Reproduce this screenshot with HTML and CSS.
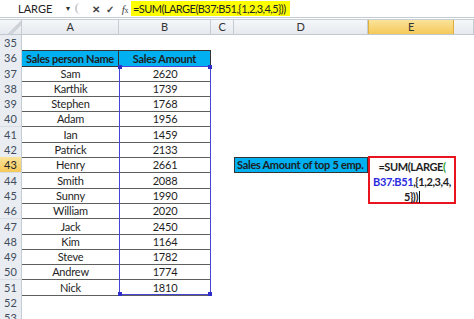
FILE: index.html
```html
<!DOCTYPE html>
<html lang="en">
<head>
    <meta charset="UTF-8">
    <title>LARGE - Sales</title>
    <link rel="stylesheet" href="styles.css">
</head>
<body>
    <div class="fbar">
        <div class="namebox">LARGE<span class="drop">&#9662;</span></div>
        <div class="grip"></div>
        <div class="fbtns">
            <span class="btn">&#10005;</span>
            <span class="btn">&#10003;</span>
            <span class="btn fx"><i>f</i><small>x</small></span>
        </div>
        <div class="formula"><span class="hl">=SUM(LARGE(B37:B51,{1,2,3,4,5}))</span></div>
    </div>

    <div class="sheet">
        <div class="row colhdr">
            <div class="corner"></div>
            <div>A</div><div>B</div><div>C</div><div>D</div><div class="on">E</div><div></div>
        </div>
        <div class="row"><div class="rn">35</div></div>
        <div class="row"><div class="rn">36</div><div class="cell hd">Sales person Name</div><div class="cell hd">Sales Amount</div></div>
        <div class="row"><div class="rn">37</div><div class="cell">Sam</div><div class="cell">2620</div></div>
        <div class="row"><div class="rn">38</div><div class="cell">Karthik</div><div class="cell">1739</div></div>
        <div class="row"><div class="rn">39</div><div class="cell">Stephen</div><div class="cell">1768</div></div>
        <div class="row"><div class="rn">40</div><div class="cell">Adam</div><div class="cell">1956</div></div>
        <div class="row"><div class="rn">41</div><div class="cell">Ian</div><div class="cell">1459</div></div>
        <div class="row"><div class="rn">42</div><div class="cell">Patrick</div><div class="cell">2133</div></div>
        <div class="row"><div class="rn on">43</div><div class="cell">Henry</div><div class="cell">2661</div><div></div><div class="label">Sales Amount of top 5 emp.</div></div>
        <div class="row"><div class="rn">44</div><div class="cell">Smith</div><div class="cell">2088</div></div>
        <div class="row"><div class="rn">45</div><div class="cell">Sunny</div><div class="cell">1990</div></div>
        <div class="row"><div class="rn">46</div><div class="cell">William</div><div class="cell">2020</div></div>
        <div class="row"><div class="rn">47</div><div class="cell">Jack</div><div class="cell">2450</div></div>
        <div class="row"><div class="rn">48</div><div class="cell">Kim</div><div class="cell">1164</div></div>
        <div class="row"><div class="rn">49</div><div class="cell">Steve</div><div class="cell">1782</div></div>
        <div class="row"><div class="rn">50</div><div class="cell">Andrew</div><div class="cell">1774</div></div>
        <div class="row"><div class="rn">51</div><div class="cell">Nick</div><div class="cell">1810</div></div>
        <div class="row"><div class="rn">52</div></div>
        <div class="row"><div class="rn">53</div></div>

        <div class="selection">
            <span class="h tl"></span><span class="h tr"></span>
            <span class="h bl"></span><span class="h br"></span>
        </div>
        <div class="edit">
            <div>=SUM(LARGE<span class="g">(</span></div>
            <div><span class="ref">B37:B51</span>,{1,2,3,4,</div>
            <div>5}))<span class="caret"></span></div>
        </div>
    </div>
</body>
</html>
```

FILE: styles.css
```css
html,
body {
    margin: 0;
    padding: 0;
    background: #fff;
    font-family: Lato, "Open Sans", sans-serif;
    font-size: 11px;
    letter-spacing: -0.2px;
    color: #1e1e1e;
    overflow: hidden;
}
.fbar {
    display: flex;
    align-items: center;
    height: 17px;
    border-bottom: 1px solid #c5cbd3;
}
.namebox {
    position: relative;
    width: 72px;
    padding-left: 18px;
    box-sizing: border-box;
    color: #222;
    letter-spacing: 0;
}
.drop {
    position: absolute;
    right: 2px;
    top: 1px;
    font-size: 8px;
    color: #333;
}
.grip {
    width: 10px;
    height: 11px;
    margin-left: 3px;
    border-radius: 50%;
    border-left: 2px solid #c9ccd1;
    box-sizing: border-box;
}
.fbtns {
    display: flex;
    gap: 4px;
    margin-left: 6px;
    color: #444;
}
.btn {
    width: 10px;
    text-align: center;
    font-weight: bold;
    font-size: 10px;
}
.fx {
    font-family: "Liberation Serif", serif;
    font-weight: normal;
    font-size: 11px;
    width: 12px;
}
.fx small {
    font-size: 8px;
}
.formula {
    flex: 1;
    height: 17px;
    display: flex;
    align-items: center;
}
.hl {
    background: #ffff00;
    padding: 1px 4px 1px 2px;
    line-height: 13px;
    color: #222;
    letter-spacing: -0.55px;
}
.sheet {
    position: relative;
    margin-top: 1px;
    border-top: 1px solid #c8ced6;
}
.row {
    display: grid;
    grid-template-columns: 22px 97px 92px 23px 134px 86px 20px;
    height: 15.3px;
}
.colhdr {
    height: 15px;
    background: linear-gradient(#f5f7f9, #e6e9ee);
    border-bottom: 1px solid #c2c8d0;
    box-sizing: border-box;
}
.colhdr > div {
    text-align: center;
    line-height: 14px;
    color: #333;
    border-right: 1px solid #c6ccd4;
}
.colhdr .on {
    background: linear-gradient(#fae39a, #f5c95a);
    border-right-color: #e0ae3c;
    border-left: 1px solid #e0ae3c;
}
.corner {
    background: linear-gradient(135deg, transparent 60%, #cfd4da 60%, #cfd4da 75%, transparent 75%);
}
.rn {
    background: #e9edf2;
    border-right: 1px solid #c6ccd4;
    border-bottom: 1px solid #d8dde3;
    box-sizing: border-box;
    text-align: center;
    line-height: 15px;
    color: #3f4c5c;
    letter-spacing: 0;
}
.rn.on {
    background: linear-gradient(#fae39a, #f5c95a);
    color: #222;
}
.cell {
    text-align: center;
    line-height: 15px;
    border-bottom: 1px solid #5e5e5e;
    box-sizing: border-box;
    white-space: nowrap;
}
.hd {
    background: #00b0f0;
    font-weight: bold;
    letter-spacing: -0.3px;
    border: 1px solid #333;
    border-left-width: 0;
}
.hd:first-of-type {
    border-left-width: 1px;
}
.label {
    background: #00b0f0;
    font-weight: bold;
    letter-spacing: -0.3px;
    line-height: 13px;
    border: 1px solid #333;
    white-space: nowrap;
    padding-left: 2px;
}
.selection {
    position: absolute;
    left: 119px;
    top: 46px;
    width: 92px;
    height: 229px;
    border: 1px solid #4646d6;
    box-sizing: border-box;
}
.h {
    position: absolute;
    width: 4px;
    height: 4px;
    background: #3030c8;
}
.tl { left: -2px; top: -2px; }
.tr { right: -2px; top: -2px; }
.bl { left: -2px; bottom: -2px; }
.br { right: -2px; bottom: -2px; }
.edit {
    position: absolute;
    left: 368px;
    top: 136px;
    width: 88px;
    height: 48px;
    box-sizing: border-box;
    border: 2px solid #e8141e;
    background: #fff;
    text-align: center;
    font-weight: bold;
    letter-spacing: -0.4px;
    line-height: 15px;
    padding-top: 1px;
    color: #1e1e1e;
    white-space: nowrap;
}
.g {
    color: #2ca02c;
}
.ref {
    color: #2a2ae0;
}
.caret {
    display: inline-block;
    width: 1px;
    height: 12px;
    background: #111;
    vertical-align: -2px;
    margin-left: 1px;
}
```
